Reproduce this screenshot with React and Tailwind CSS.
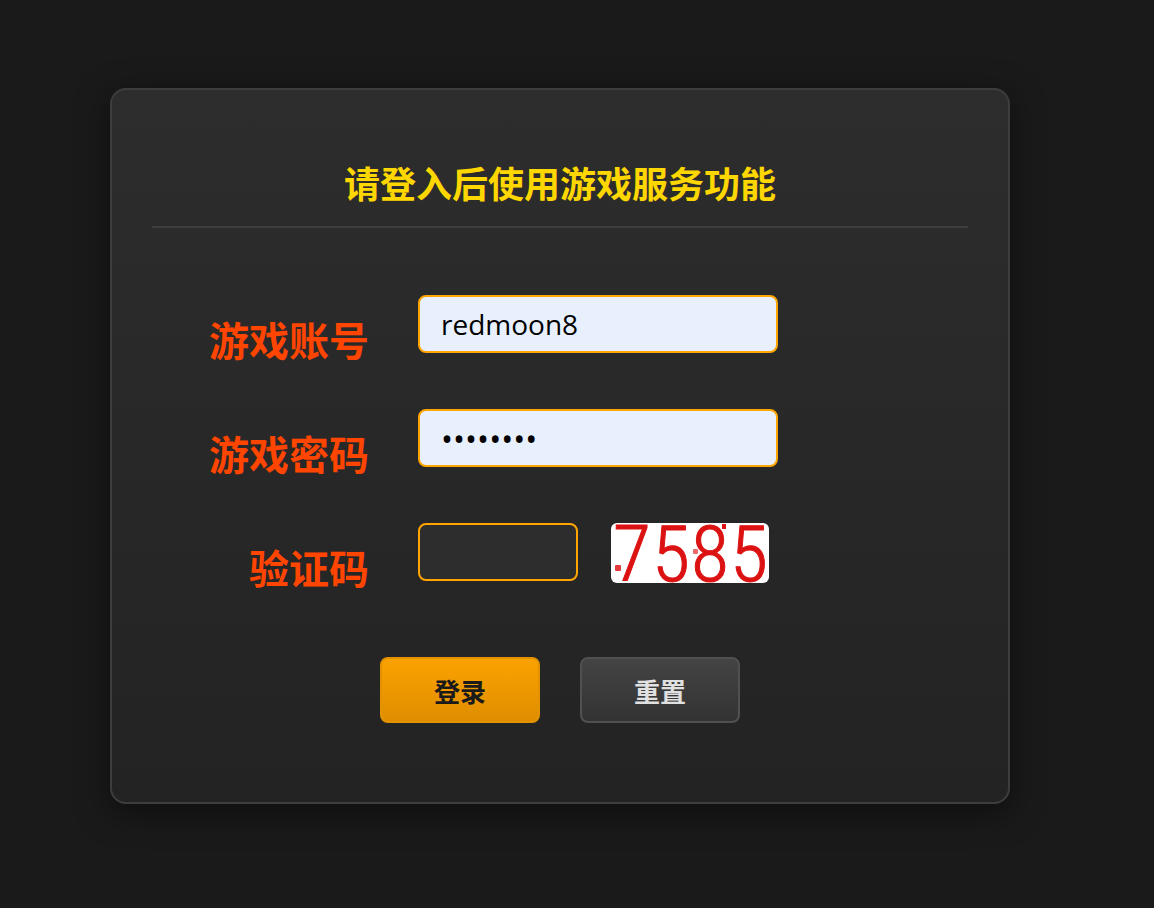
import React, { useState } from "react";

const CAPTCHA_DIGITS = [
  { value: "7", x: 21 },
  { value: "5", x: 60 },
  { value: "8", x: 99 },
  { value: "5", x: 138 },
];

const labelClass =
  "pt-4 text-right text-[40px] leading-[60px] font-bold text-[#ff4500]";
const inputClass =
  "h-[58px] rounded-lg border-2 border-[#ffa500] px-[21px] text-black outline-none";
const buttonClass =
  "h-[66px] w-40 rounded-lg border-2 bg-linear-to-b pt-1 text-[26px] font-bold";

// Verification code picture
function Captcha() {
  return (
    <svg
      viewBox="0 0 158 60"
      className="h-[60px] w-[158px] overflow-visible rounded-md bg-white"
      role="img"
      aria-label="验证码"
    >
      <g
        fill="#dc1212"
        stroke="#dc1212"
        strokeWidth="1"
        fontFamily="'Roboto Condensed', Roboto, 'Liberation Sans Narrow', sans-serif"
        fontSize="78"
        fontWeight="300"
        fontStretch="condensed"
        textAnchor="middle"
      >
        {CAPTCHA_DIGITS.map((digit) => (
          <text key={digit.x} x={digit.x} y="58">
            {digit.value}
          </text>
        ))}
      </g>
      <rect x="4" y="42" width="6" height="6" rx="1" fill="#e33b3b" />
      <rect x="82" y="26" width="5" height="5" rx="1" fill="#e86a6a" />
      <rect x="111" y="1" width="4" height="5" fill="#dc1212" />
    </svg>
  );
}

export default function App() {
  const [account, setAccount] = useState("redmoon8");
  const [password, setPassword] = useState("redmoon8");
  const [code, setCode] = useState("");

  // Clear all fields
  const handleReset = () => {
    setAccount("");
    setPassword("");
    setCode("");
  };

  const handleSubmit = (e) => {
    e.preventDefault();
  };

  return (
    <div className="min-h-screen bg-[#1a1a1a] pt-[88px] pr-[34px] pb-20 font-['Open_Sans','Noto_Sans_CJK_SC',sans-serif]">
      <main className="mx-auto max-w-[900px] rounded-2xl border-2 border-[#3d3d3d] bg-linear-to-b from-[#2d2d2d] to-[#232323] px-10 pt-[65px] pb-[79px] shadow-[0_8px_32px_rgba(0,0,0,0.5)]">
        <h1 className="border-b-2 border-[#3d3d3d] pb-[11px] text-center text-[36px] leading-[60px] font-bold text-[#ffd700]">
          请登入后使用游戏服务功能
        </h1>

        <form onSubmit={handleSubmit}>
          <div className="mt-[67px] grid grid-cols-[217px_1fr] items-start gap-x-[49px] gap-y-[38px]">
            <label htmlFor="account" className={labelClass}>
              游戏账号
            </label>
            <input
              id="account"
              type="text"
              value={account}
              onChange={(e) => setAccount(e.target.value)}
              className={`${inputClass} w-[360px] bg-[#e8f0fe] text-[28px]`}
            />

            <label htmlFor="password" className={labelClass}>
              游戏密码
            </label>
            <input
              id="password"
              type="password"
              value={password}
              onChange={(e) => setPassword(e.target.value)}
              className={`${inputClass} w-[360px] bg-[#e8f0fe] text-[32px]`}
            />

            <label htmlFor="code" className={labelClass}>
              验证码
            </label>
            <div className="flex items-start gap-[33px]">
              <input
                id="code"
                type="text"
                value={code}
                onChange={(e) => setCode(e.target.value)}
                className={`${inputClass} w-40 bg-[#2d2d2d] text-[28px]`}
              />
              <Captcha />
            </div>
          </div>

          <div className="mt-[58px] flex justify-center gap-10">
            <button
              type="submit"
              className={`${buttonClass} border-[#e39200] from-[#fba200] to-[#e08e00] text-[#1a1a1a]`}
            >
              登录
            </button>
            <button
              type="button"
              onClick={handleReset}
              className={`${buttonClass} border-[#505050] from-[#444444] to-[#333333] text-[#e0e0e0]`}
            >
              重置
            </button>
          </div>
        </form>
      </main>
    </div>
  );
}
